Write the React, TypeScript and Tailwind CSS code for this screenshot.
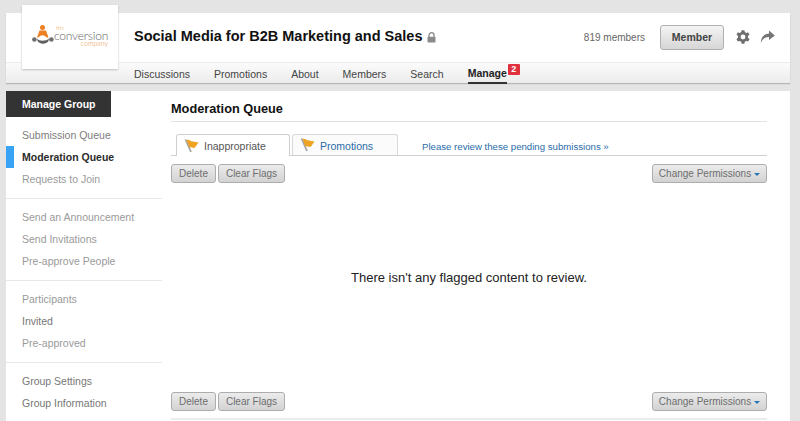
import React from 'react';

const font = 'font-["Liberation_Sans",Arial,sans-serif]';

const navItems = ['Discussions', 'Promotions', 'About', 'Members', 'Search'];

const sideGroups = [
  [
    { label: 'Submission Queue', tone: 'text-[#7d7d7d]' },
    { label: 'Moderation Queue', tone: 'text-[#2b2b2b] font-bold', active: true },
    { label: 'Requests to Join', tone: 'text-[#9a9a9a]' },
  ],
  [
    { label: 'Send an Announcement', tone: 'text-[#9a9a9a]' },
    { label: 'Send Invitations', tone: 'text-[#9a9a9a]' },
    { label: 'Pre-approve People', tone: 'text-[#9a9a9a]' },
  ],
  [
    { label: 'Participants', tone: 'text-[#9a9a9a]' },
    { label: 'Invited', tone: 'text-[#777777]' },
    { label: 'Pre-approved', tone: 'text-[#9a9a9a]' },
  ],
  [
    { label: 'Group Settings', tone: 'text-[#777777]' },
    { label: 'Group Information', tone: 'text-[#777777]' },
  ],
];

const Flag = () => (
  <svg width="16" height="14" viewBox="0 0 16 14" className="shrink-0">
    <path d="M1.5 0.5 L7 13" stroke="#a5a5a5" strokeWidth="1.8" fill="none" />
    <path d="M2.5 1 C5 0 6.5 2.6 9 2.4 L14.5 3.4 L11 8.6 C9 9.6 7 7.6 5.4 8.4 Z" fill="#eea322" />
  </svg>
);

const Logo = () => (
  <div className="flex items-start mt-[-2px]">
    <svg width="22" height="19" viewBox="0 0 22 19" className="shrink-0">
      <circle cx="10.5" cy="2.6" r="2.5" fill="#ee7f22" />
      <path d="M7.5 5.5 H14 L16.5 12.5 C15 14 13.8 10.5 10.5 10.3 C8 10.3 6.5 13 5 12.5 Z" fill="#ee7f22" />
      <circle cx="2.4" cy="14.5" r="2.3" fill="#6e6e6e" />
      <circle cx="19.4" cy="14.5" r="2.3" fill="#6e6e6e" />
      <path d="M5 13.5 C7 16.5 14 16.5 17 13.5 L16.5 16 C14 19.5 8 19.5 5.5 16 Z" fill="#5f5f5f" />
    </svg>
    <div className="flex flex-col font-['Lato',sans-serif] font-light">
      <span className="text-[6px] leading-[6px] text-[#ee9a4a] ml-[2px]">the</span>
      <span className="text-[12px] leading-[9px] text-[#666666] tracking-[-0.2px]">conversion</span>
      <span className="text-[7px] leading-[7px] text-[#ee9340] self-end">company</span>
    </div>
  </div>
);

const GreyButton = ({ children, className = '' }: { children: React.ReactNode; className?: string }) => (
  <div
    className={`h-[19px] flex items-center justify-center rounded-[3px] border border-[#adadad] bg-gradient-to-b from-[#ececec] to-[#d2d2d2] text-[10px] text-[#6d6d6d] ${className}`}
  >
    {children}
  </div>
);

const ActionBar = () => (
  <div className="flex items-center justify-between">
    <div className="flex gap-[2px]">
      <GreyButton className="w-[45px]">Delete</GreyButton>
      <GreyButton className="w-[67px]">Clear Flags</GreyButton>
    </div>
    <GreyButton className="w-[115px] text-[9.7px]">
      Change Permissions
      <span className="ml-[3px] mt-[1px] w-0 h-0 border-x-[3px] border-x-transparent border-t-[3px] border-t-[#2a77b5]" />
    </GreyButton>
  </div>
);

export default function App() {
  return (
    <div className={`${font} w-[800px] h-[421px] overflow-hidden bg-[#e4e4e4] pl-[6px] pr-[10px] pt-[13px]`}>
      <header className="relative h-[70px] bg-white shadow-[0_1px_1px_#b5b5b5]">
        <div className="absolute left-[16px] top-[-8px] w-[96px] h-[64px] bg-white shadow-[0_1px_2px_#bdbdbd] flex items-center justify-center z-10">
          <Logo />
        </div>
        <div className="h-[49px] flex items-center pl-[128px] pr-[15px]">
          <h1 className="text-[14.5px] font-bold text-[#111111] mt-[-1px]">Social Media for B2B Marketing and Sales</h1>
          <svg width="9" height="11" viewBox="0 0 9 11" className="ml-[5px]">
            <path d="M2 5 V3.2 a2.5 2.5 0 0 1 5 0 V5" fill="none" stroke="#8a8a8a" strokeWidth="1.3" />
            <rect x="0.5" y="4.8" width="8" height="5.7" rx="0.8" fill="#8a8a8a" />
          </svg>
          <span className="ml-auto text-[10px] text-[#666666] mt-[-1px]">819 members</span>
          <div className="ml-[15px] w-[64px] h-[25px] flex items-center justify-center rounded-[3px] border border-[#b0b0b0] bg-gradient-to-b from-[#f4f4f4] to-[#d6d6d6] text-[10.5px] font-bold text-[#444444]">
            Member
          </div>
          <svg width="14" height="14" viewBox="0 0 14 14" className="ml-[12px] mt-[-2px]">
            <path
              fillRule="evenodd"
              fill="#6f6f6f"
              d="M5.6 0.2 H8.4 L8.8 2.1 L10.3 2.9 L12.1 2.2 L13.5 4.6 L12 5.9 V7.7 L13.6 9 L12.2 11.5 L10.3 10.9 L8.8 11.8 L8.4 13.8 H5.6 L5.2 11.8 L3.7 10.9 L1.8 11.5 L0.4 9 L2 7.7 V5.9 L0.5 4.6 L1.9 2.2 L3.7 2.9 L5.2 2.1 Z M7 4.6 A2.4 2.4 0 1 0 7 9.4 A2.4 2.4 0 1 0 7 4.6 Z"
            />
          </svg>
          <svg width="15" height="14" viewBox="0 0 15 14" className="ml-[10px] mt-[-2px]">
            <path fill="#757575" d="M9 0.5 L14.8 5.5 L9 10 V7 C5.5 7 3 8.5 0.8 13 C1 8 3.5 3.8 9 3.5 Z" />
          </svg>
        </div>
        <nav className="h-[21px] border-t border-[#ececec] bg-gradient-to-b from-[#fbfbfb] to-[#ececec] flex pl-[128px] text-[10.5px] text-[#444444]">
          {navItems.map((item) => (
            <span key={item} className="mr-[24px] h-[21px] pt-[2px] flex items-center">
              {item}
            </span>
          ))}
          <span className="relative h-[21px] pt-[2px] flex items-center font-bold text-[#222222] border-b-2 border-[#333333]">
            Manage
            <span className="absolute left-[40px] top-[1px] w-[12px] h-[11px] rounded-[1px] bg-[#e0313f] text-white text-[9px] font-bold flex items-center justify-center">
              2
            </span>
          </span>
        </nav>
      </header>

      <main className="mt-[8px] h-[400px] bg-white flex">
        <aside className="w-[156px] shrink-0">
          <div className="w-[105px] h-[26px] pt-[2px] bg-[#333333] text-white text-[10.5px] font-bold flex items-center pl-[16px]">
            Manage Group
          </div>
          <div className="pt-[7px]">
            {sideGroups.map((group, i) => (
              <div key={i} className={i > 0 ? 'border-t border-[#e8e8e8] mt-[8px] pt-[7px]' : ''}>
                {group.map((row) => (
                  <div
                    key={row.label}
                    className={`h-[22px] pt-[2px] flex items-center text-[10.5px] ${row.tone} ${
                      row.active ? 'border-l-[8px] border-[#39a3f5] pl-[8px]' : 'pl-[16px]'
                    }`}
                  >
                    {row.label}
                  </div>
                ))}
              </div>
            ))}
          </div>
        </aside>

        <section className="w-[596px] ml-[9px] flex flex-col">
          <h2 className="h-[31px] flex items-center text-[12.75px] font-bold text-[#111111] border-b border-[#e2e2e2] pt-[5px]">
            Moderation Queue
          </h2>
          <div className="mt-[12px] h-[22px] flex items-end border-b border-[#cfcfcf] pl-[5px] text-[10.5px]">
            <div className="h-[22px] w-[114px] mb-[-1px] bg-white border border-b-0 border-[#cfcfcf] rounded-t-[3px] flex items-center pl-[7px] gap-[4px] text-[#555555]">
              <Flag />
              <span className="mt-[2px]">Inappropriate</span>
            </div>
            <div className="h-[21px] w-[106px] ml-[2px] bg-[#fbfbfb] border border-b-0 border-[#d8d8d8] rounded-t-[3px] flex items-center pl-[7px] gap-[4px] text-[#2a6ca8]">
              <Flag />
              <span className="mt-[3px]">Promotions</span>
            </div>
            <span className="ml-[24px] mb-[1px] text-[9.65px] text-[#2a6ca8]">Please review these pending submissions »</span>
          </div>
          <div className="mt-[8px]">
            <ActionBar />
          </div>
          <div className="h-[209px] pb-[19px] flex items-center justify-center text-[13px] text-[#222222]">
            There isn't any flagged content to review.
          </div>
          <ActionBar />
          <div className="mt-[7px] h-[2px] bg-[#ececec]" />
        </section>
      </main>
    </div>
  );
}
